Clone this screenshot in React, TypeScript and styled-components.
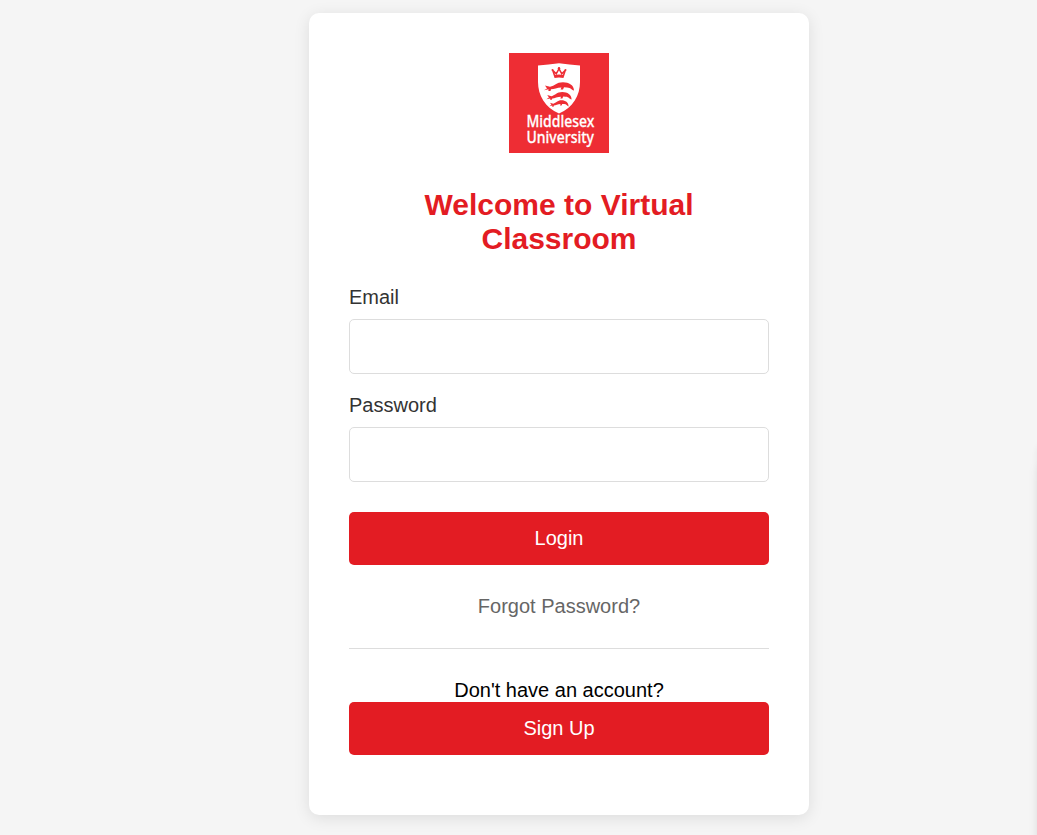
import React from "react";
import styled, { createGlobalStyle } from "styled-components";

const GlobalStyle = createGlobalStyle`
  *, *::before, *::after { box-sizing: border-box; }
  body {
    margin: 0;
    background: #f5f5f5;
    font-family: "Liberation Sans", Arial, sans-serif;
    font-size: 20px;
    overflow: hidden;
  }
`;

const Page = styled.main`
  display: flex;
  justify-content: center;
  height: 100vh;
  padding: 13px 0 20px 81px;
`;

const Card = styled.section`
  display: flex;
  flex-direction: column;
  width: 500px;
  height: 802px;
  padding: 40px;
  background: #fff;
  border-radius: 10px;
  box-shadow: 0 3px 16px rgba(0, 0, 0, 0.1);
`;

const Logo = styled.svg`
  display: block;
  width: 100px;
  height: 100px;
  margin: 0 auto 35px;
`;

const Title = styled.h1`
  margin: 0 0 30px;
  color: #e31c23;
  font-size: 30px;
  line-height: 34px;
  font-weight: 700;
  text-align: center;
`;

const Form = styled.form`
  display: flex;
  flex-direction: column;
`;

const Field = styled.label<{ $gap: number }>`
  display: flex;
  flex-direction: column;
  gap: 10px;
  margin-bottom: ${(p) => p.$gap}px;
  color: #333;
  line-height: 23px;
`;

const Input = styled.input`
  width: 100%;
  height: 55px;
  padding: 15px;
  border: 1px solid #ddd;
  border-radius: 5px;
  background: #fff;
  font: inherit;
  outline: none;
`;

const Button = styled.button`
  height: 53px;
  padding: 0;
  border: 0;
  border-radius: 5px;
  background: #e31c23;
  color: #fff;
  font: inherit;
  line-height: 23px;
  cursor: pointer;
`;

const ForgotLink = styled.a`
  margin: 30px 0;
  color: #666;
  line-height: 23px;
  text-align: center;
`;

const SignUp = styled.div`
  display: flex;
  flex-direction: column;
  padding-top: 30px;
  border-top: 1px solid #ddd;
  text-align: center;
  line-height: 23px;
`;

const EdgeShadow = styled.div`
  position: fixed;
  top: 442px;
  left: 100%;
  width: 300px;
  height: 600px;
  border-radius: 10px;
  box-shadow: 0 20px 12px rgba(0, 0, 0, 0.06), 0 0 6px rgba(0, 0, 0, 0.06);
`;

function Fish() {
  return (
    <path
      fill="#ee2d34"
      d="M-15 4 L-12 2.2 L-14 -.6 L-9 .6 C-4-.4-3-4 4-4 C10-4 15-1 15 4.3 C12 3.6 12 1.3 8 1.2 L5 1.1 L4 3.2 L1.6 3.2 L2.4 1.2 C-2 1.3-5 3-8 3.1 L-8.5 4.7 L-10.6 4.7 L-10.5 3.1Z"
    />
  );
}

function UniversityLogo() {
  return (
    <Logo viewBox="0 0 100 100" role="img" aria-label="Middlesex University">
      <rect width="100" height="100" fill="#ee2d34" />
      <path
        fill="#fff"
        d="M29 12.5 C36 11.7 43 11.2 50 10.3 C57 11.2 64 11.7 71 12.5 V29 C71 42 64 55 50 60.5 C36 55 29 42 29 29Z"
      />
      <path
        d="M45.6 22.8 L43.7 17.2 L47.2 20.8 L50 15.8 L52.8 20.8 L56.3 17.2 L54.4 22.8 Q50 21.8 45.6 22.8Z"
        fill="none"
        stroke="#ee2d34"
        strokeWidth="1.5"
      />
      <path d="M45.3 24 Q50 23 54.7 24" fill="none" stroke="#ee2d34" strokeWidth="2" />
      <g fill="#ee2d34">
        <circle cx="43.5" cy="17" r="1" />
        <circle cx="50" cy="15.2" r="1.2" />
        <circle cx="56.5" cy="17" r="1" />
      </g>
      <g transform="translate(50 33.2)"><Fish /></g>
      <g transform="translate(50 42.6) scale(.84 .9)"><Fish /></g>
      <g transform="translate(50 50.2) scale(.64 .75)"><Fish /></g>
      <text
        transform="translate(17.5 74) scale(.86 1)"
        fill="#fff"
        stroke="#fff"
        strokeWidth=".25"
        fontFamily='"Noto Sans", sans-serif'
        fontSize="15.5"
        fontWeight="500"
      >
        <tspan x="0" y="0" textLength="79" lengthAdjust="spacingAndGlyphs">Middlesex</tspan>
        <tspan x="0" y="15.7" textLength="78.5" lengthAdjust="spacingAndGlyphs">University</tspan>
      </text>
    </Logo>
  );
}

export default function App() {
  return (
    <>
      <GlobalStyle />
      <Page>
        <Card>
          <UniversityLogo />
          <Title>Welcome to Virtual Classroom</Title>
          <Form onSubmit={(e) => e.preventDefault()}>
            <Field $gap={20}>
              Email
              <Input type="email" />
            </Field>
            <Field $gap={30}>
              Password
              <Input type="password" />
            </Field>
            <Button type="submit">Login</Button>
          </Form>
          <ForgotLink>Forgot Password?</ForgotLink>
          <SignUp>
            Don't have an account?
            <Button type="button">Sign Up</Button>
          </SignUp>
        </Card>
      </Page>
      <EdgeShadow />
    </>
  );
}
